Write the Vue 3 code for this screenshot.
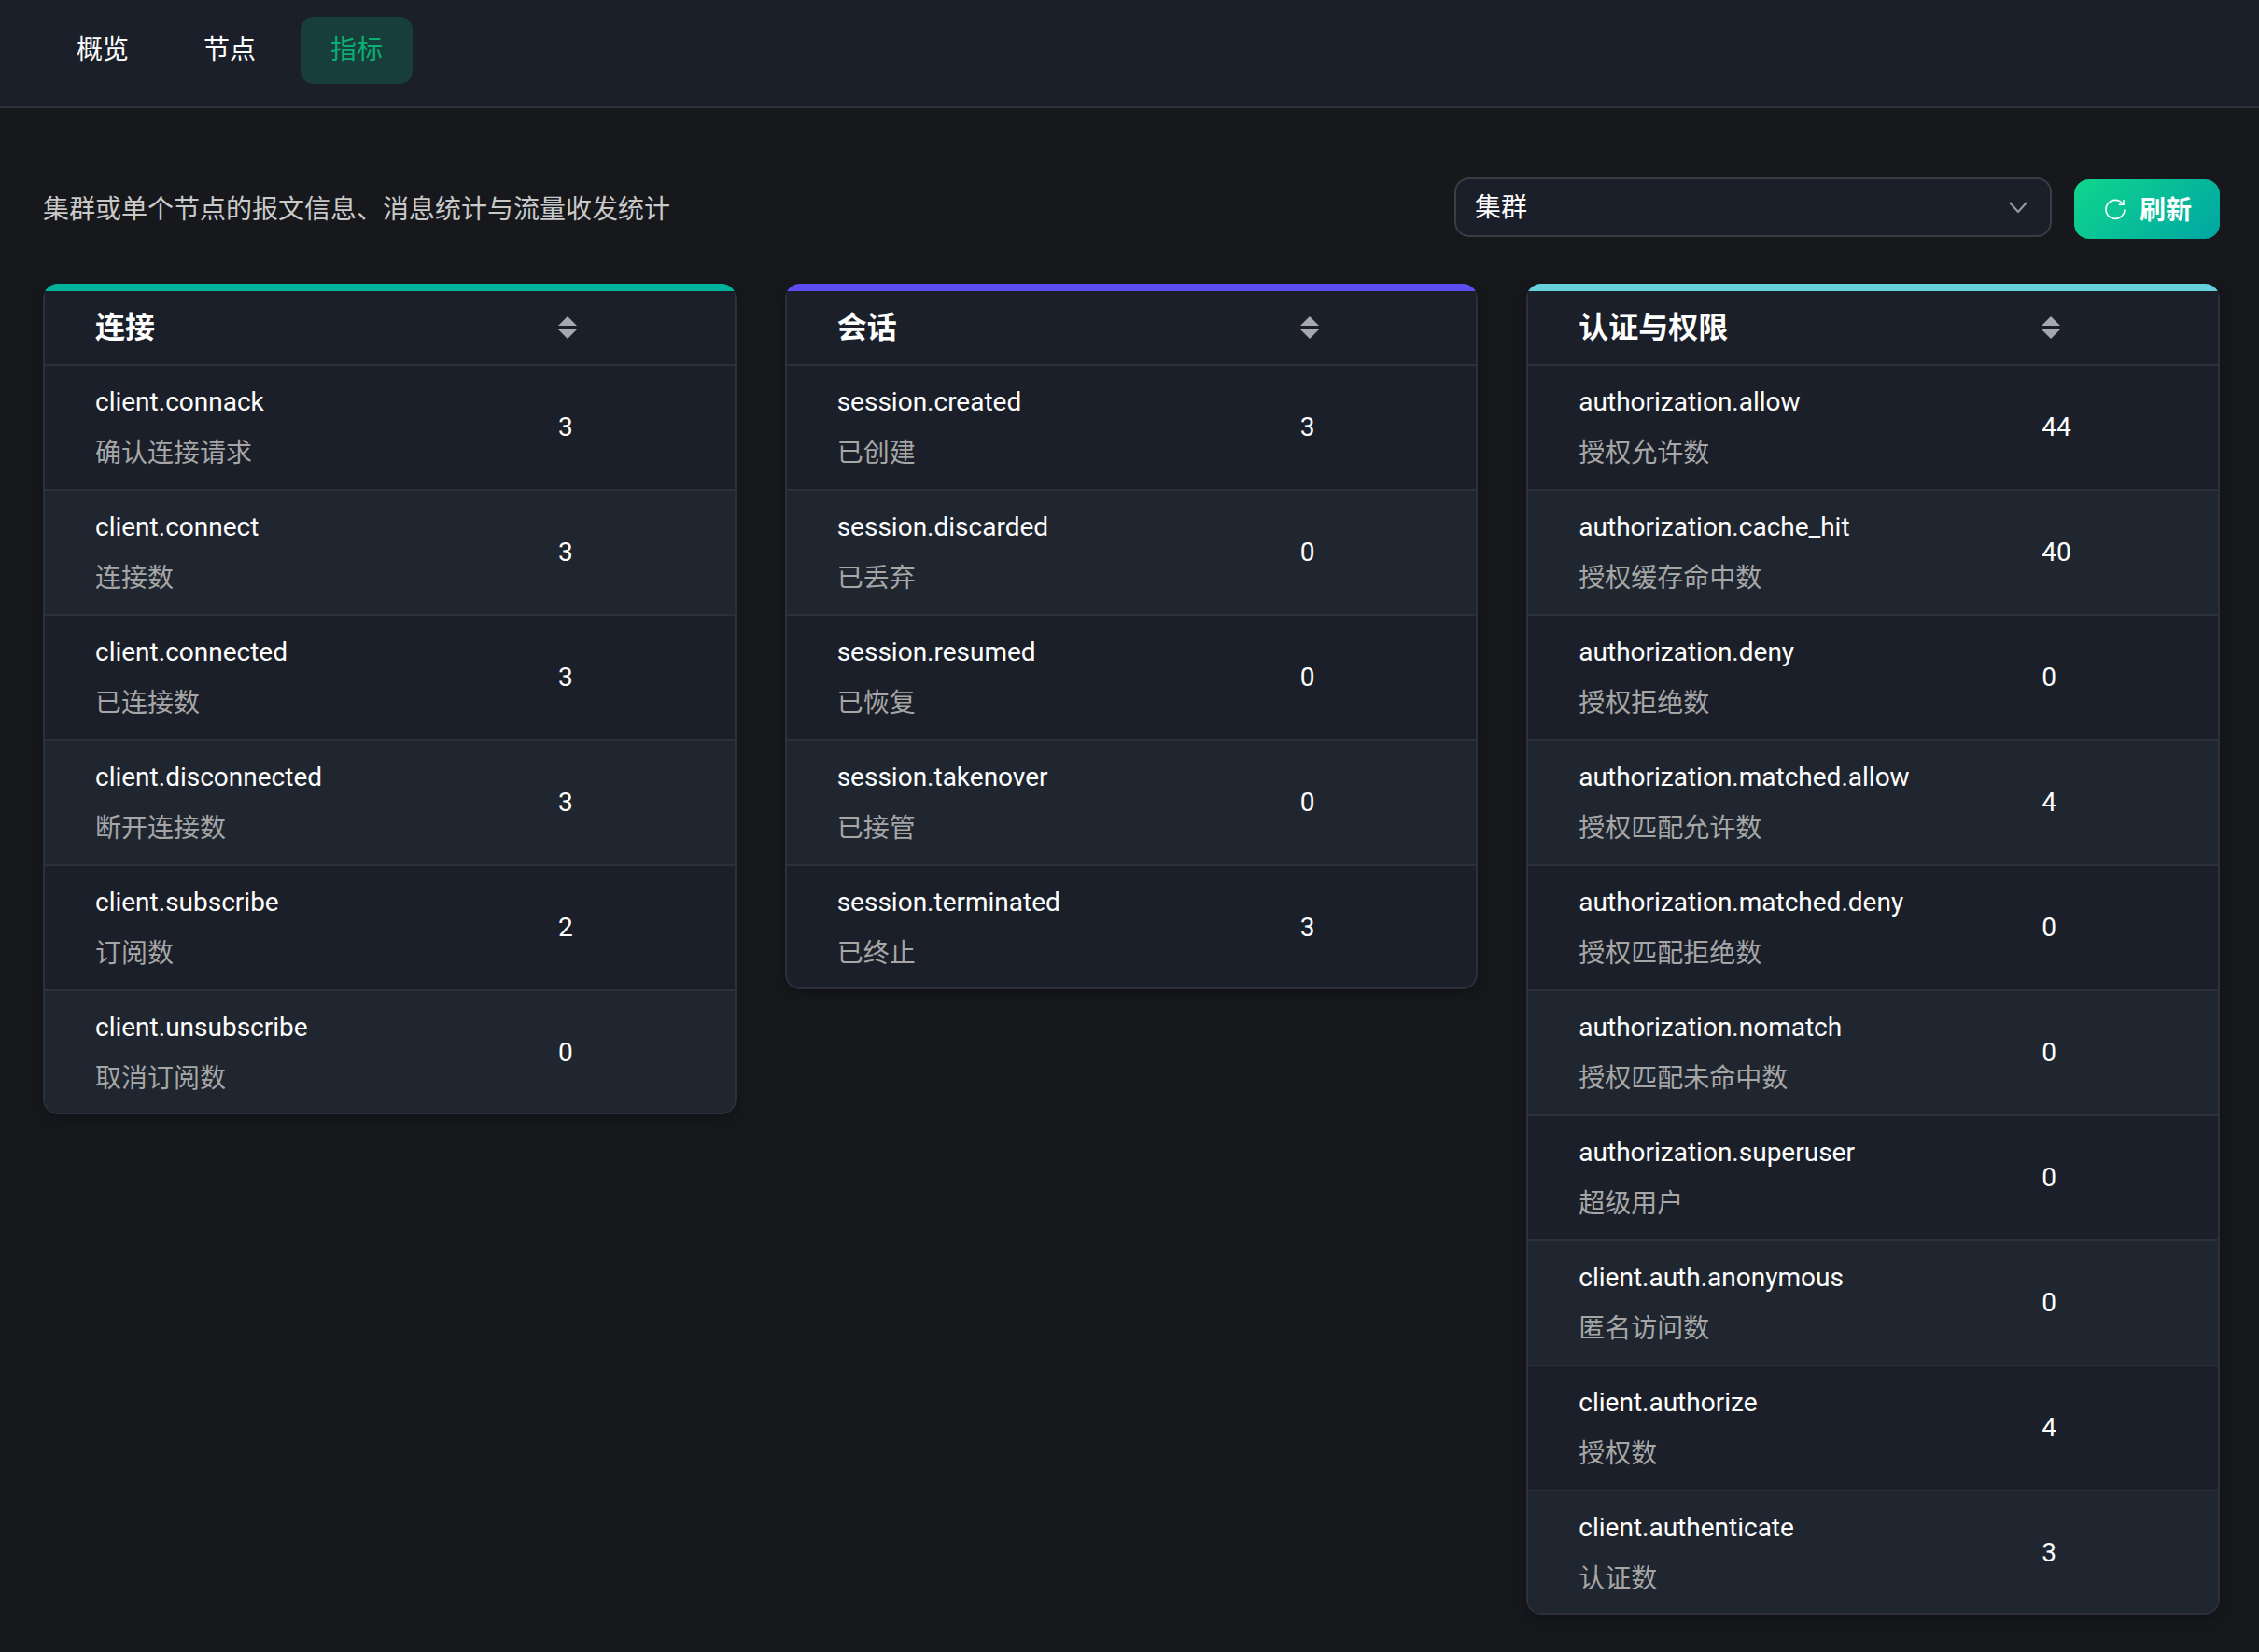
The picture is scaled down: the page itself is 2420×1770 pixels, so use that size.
<template>
  <div class="page">
    <div class="tabs">
      <div
        v-for="tab in tabs"
        :key="tab"
        class="tab"
        :class="{ active: tab === '指标' }"
      >{{ tab }}</div>
    </div>

    <div class="content">
      <div class="toolbar">
        <p class="desc">集群或单个节点的报文信息、消息统计与流量收发统计</p>
        <div class="select">
          <span>集群</span>
          <svg class="chevron" width="20" height="12" viewBox="0 0 20 12" fill="none">
            <path d="M1 1l9 10 9-10" stroke="#9a9ca3" stroke-width="2" />
          </svg>
        </div>
        <button class="refresh">
          <svg width="24" height="24" viewBox="0 0 24 24" fill="none">
            <path d="M20.2 6.6A10 10 0 1 0 22 12.5" stroke="#fff" stroke-width="1.6" />
            <path d="M21 2v5.2h-5.2" stroke="#fff" stroke-width="1.6" />
          </svg>
          <span>刷新</span>
        </button>
      </div>

      <div class="cards">
        <div v-for="card in cards" :key="card.title" class="card" :class="card.tone">
          <div class="card-body">
            <div class="row head">
              <div class="card-title">{{ card.title }}</div>
              <svg width="20" height="24" viewBox="0 0 20 24" fill="#a6a8b0">
                <path d="M10 0l10 10H0z" />
                <path d="M0 14h20L10 24z" />
              </svg>
            </div>
            <div v-for="item in card.items" :key="item[0]" class="row item">
              <div>
                <div class="name">{{ item[0] }}</div>
                <div class="label">{{ item[1] }}</div>
              </div>
              <div class="value">{{ item[2] }}</div>
            </div>
          </div>
        </div>
      </div>
    </div>
  </div>
</template>

<script setup>
const tabs = ['概览', '节点', '指标']

const cards = [
  {
    title: '连接',
    tone: 'green',
    items: [
      ['client.connack', '确认连接请求', 3],
      ['client.connect', '连接数', 3],
      ['client.connected', '已连接数', 3],
      ['client.disconnected', '断开连接数', 3],
      ['client.subscribe', '订阅数', 2],
      ['client.unsubscribe', '取消订阅数', 0],
    ],
  },
  {
    title: '会话',
    tone: 'purple',
    items: [
      ['session.created', '已创建', 3],
      ['session.discarded', '已丢弃', 0],
      ['session.resumed', '已恢复', 0],
      ['session.takenover', '已接管', 0],
      ['session.terminated', '已终止', 3],
    ],
  },
  {
    title: '认证与权限',
    tone: 'cyan',
    items: [
      ['authorization.allow', '授权允许数', 44],
      ['authorization.cache_hit', '授权缓存命中数', 40],
      ['authorization.deny', '授权拒绝数', 0],
      ['authorization.matched.allow', '授权匹配允许数', 4],
      ['authorization.matched.deny', '授权匹配拒绝数', 0],
      ['authorization.nomatch', '授权匹配未命中数', 0],
      ['authorization.superuser', '超级用户', 0],
      ['client.auth.anonymous', '匿名访问数', 0],
      ['client.authorize', '授权数', 4],
      ['client.authenticate', '认证数', 3],
    ],
  },
]
</script>

<style>
html,
body {
  margin: 0;
  background: #17181c;
}
</style>

<style scoped>
.page {
  min-height: 1770px;
  background: #17181c;
  color: #fff;
  font-family: Roboto, "Noto Sans CJK SC", sans-serif;
  font-size: 28px;
}
.tabs {
  display: flex;
  gap: 16px;
  height: 96px;
  padding: 18px 50px 0;
  background: #1b1f29;
  border-bottom: 2px solid #2c303a;
}
.tab {
  width: 120px;
  height: 72px;
  line-height: 72px;
  text-align: center;
  border-radius: 14px;
}
.tab.active {
  background: #183e3c;
  color: #0bae70;
}
.content {
  padding: 74px 42px 0 46px;
}
.toolbar {
  display: flex;
  align-items: flex-start;
  height: 114px;
}
.desc {
  flex: 1;
  margin: 14px 0 0;
  color: #c9c9c9;
  line-height: 42px;
}
.select {
  width: 640px;
  height: 64px;
  box-sizing: border-box;
  display: flex;
  align-items: center;
  justify-content: space-between;
  padding: 0 24px 4px 20px;
  background: #1b1f29;
  border: 2px solid #3a3d45;
  border-radius: 16px;
}
.chevron {
  margin-top: 4px;
}
.refresh {
  display: flex;
  align-items: center;
  justify-content: center;
  gap: 14px;
  width: 156px;
  height: 64px;
  margin: 2px 0 0 24px;
  padding: 0 0 3px 2px;
  border: none;
  border-radius: 16px;
  background: linear-gradient(135deg, #10d68c, #00a6a3);
  color: #fff;
  font: inherit;
  font-weight: 700;
}
.refresh svg {
  margin-top: 3px;
}
.cards {
  display: grid;
  grid-template-columns: repeat(3, 1fr);
  gap: 52px;
  align-items: start;
}
.card {
  padding-top: 8px;
  border-radius: 16px;
  overflow: hidden;
  background: linear-gradient(var(--accent), var(--accent)) top / 100% 8px no-repeat;
  box-shadow: 0 4px 14px rgba(0, 0, 0, 0.25);
}
.card.green {
  --accent: #00b29a;
}
.card.purple {
  --accent: #5d4ef2;
}
.card.cyan {
  --accent: #66d0dc;
}
.card-body {
  border: 2px solid #2c303a;
  border-top: none;
  border-radius: 0 0 16px 16px;
  overflow: hidden;
  background: #1b1f29;
}
.row {
  display: grid;
  grid-template-columns: 496px 1fr;
  align-items: center;
  padding-left: 54px;
  box-sizing: border-box;
  border-bottom: 2px solid #2c303a;
}
.row:last-child {
  height: 130px;
  padding-top: 2px;
  border-bottom: none;
}
.head {
  height: 80px;
}
.head svg {
  display: block;
}
.card-title {
  padding-bottom: 6px;
  font-size: 32px;
  font-weight: 700;
}
.item {
  height: 134px;
}
.item:nth-child(odd) {
  background: #1f2630;
}
.name {
  line-height: 42px;
  margin-bottom: 13px;
}
.label {
  line-height: 42px;
  color: #a6a6a6;
}
.value {
  line-height: 42px;
}
</style>
